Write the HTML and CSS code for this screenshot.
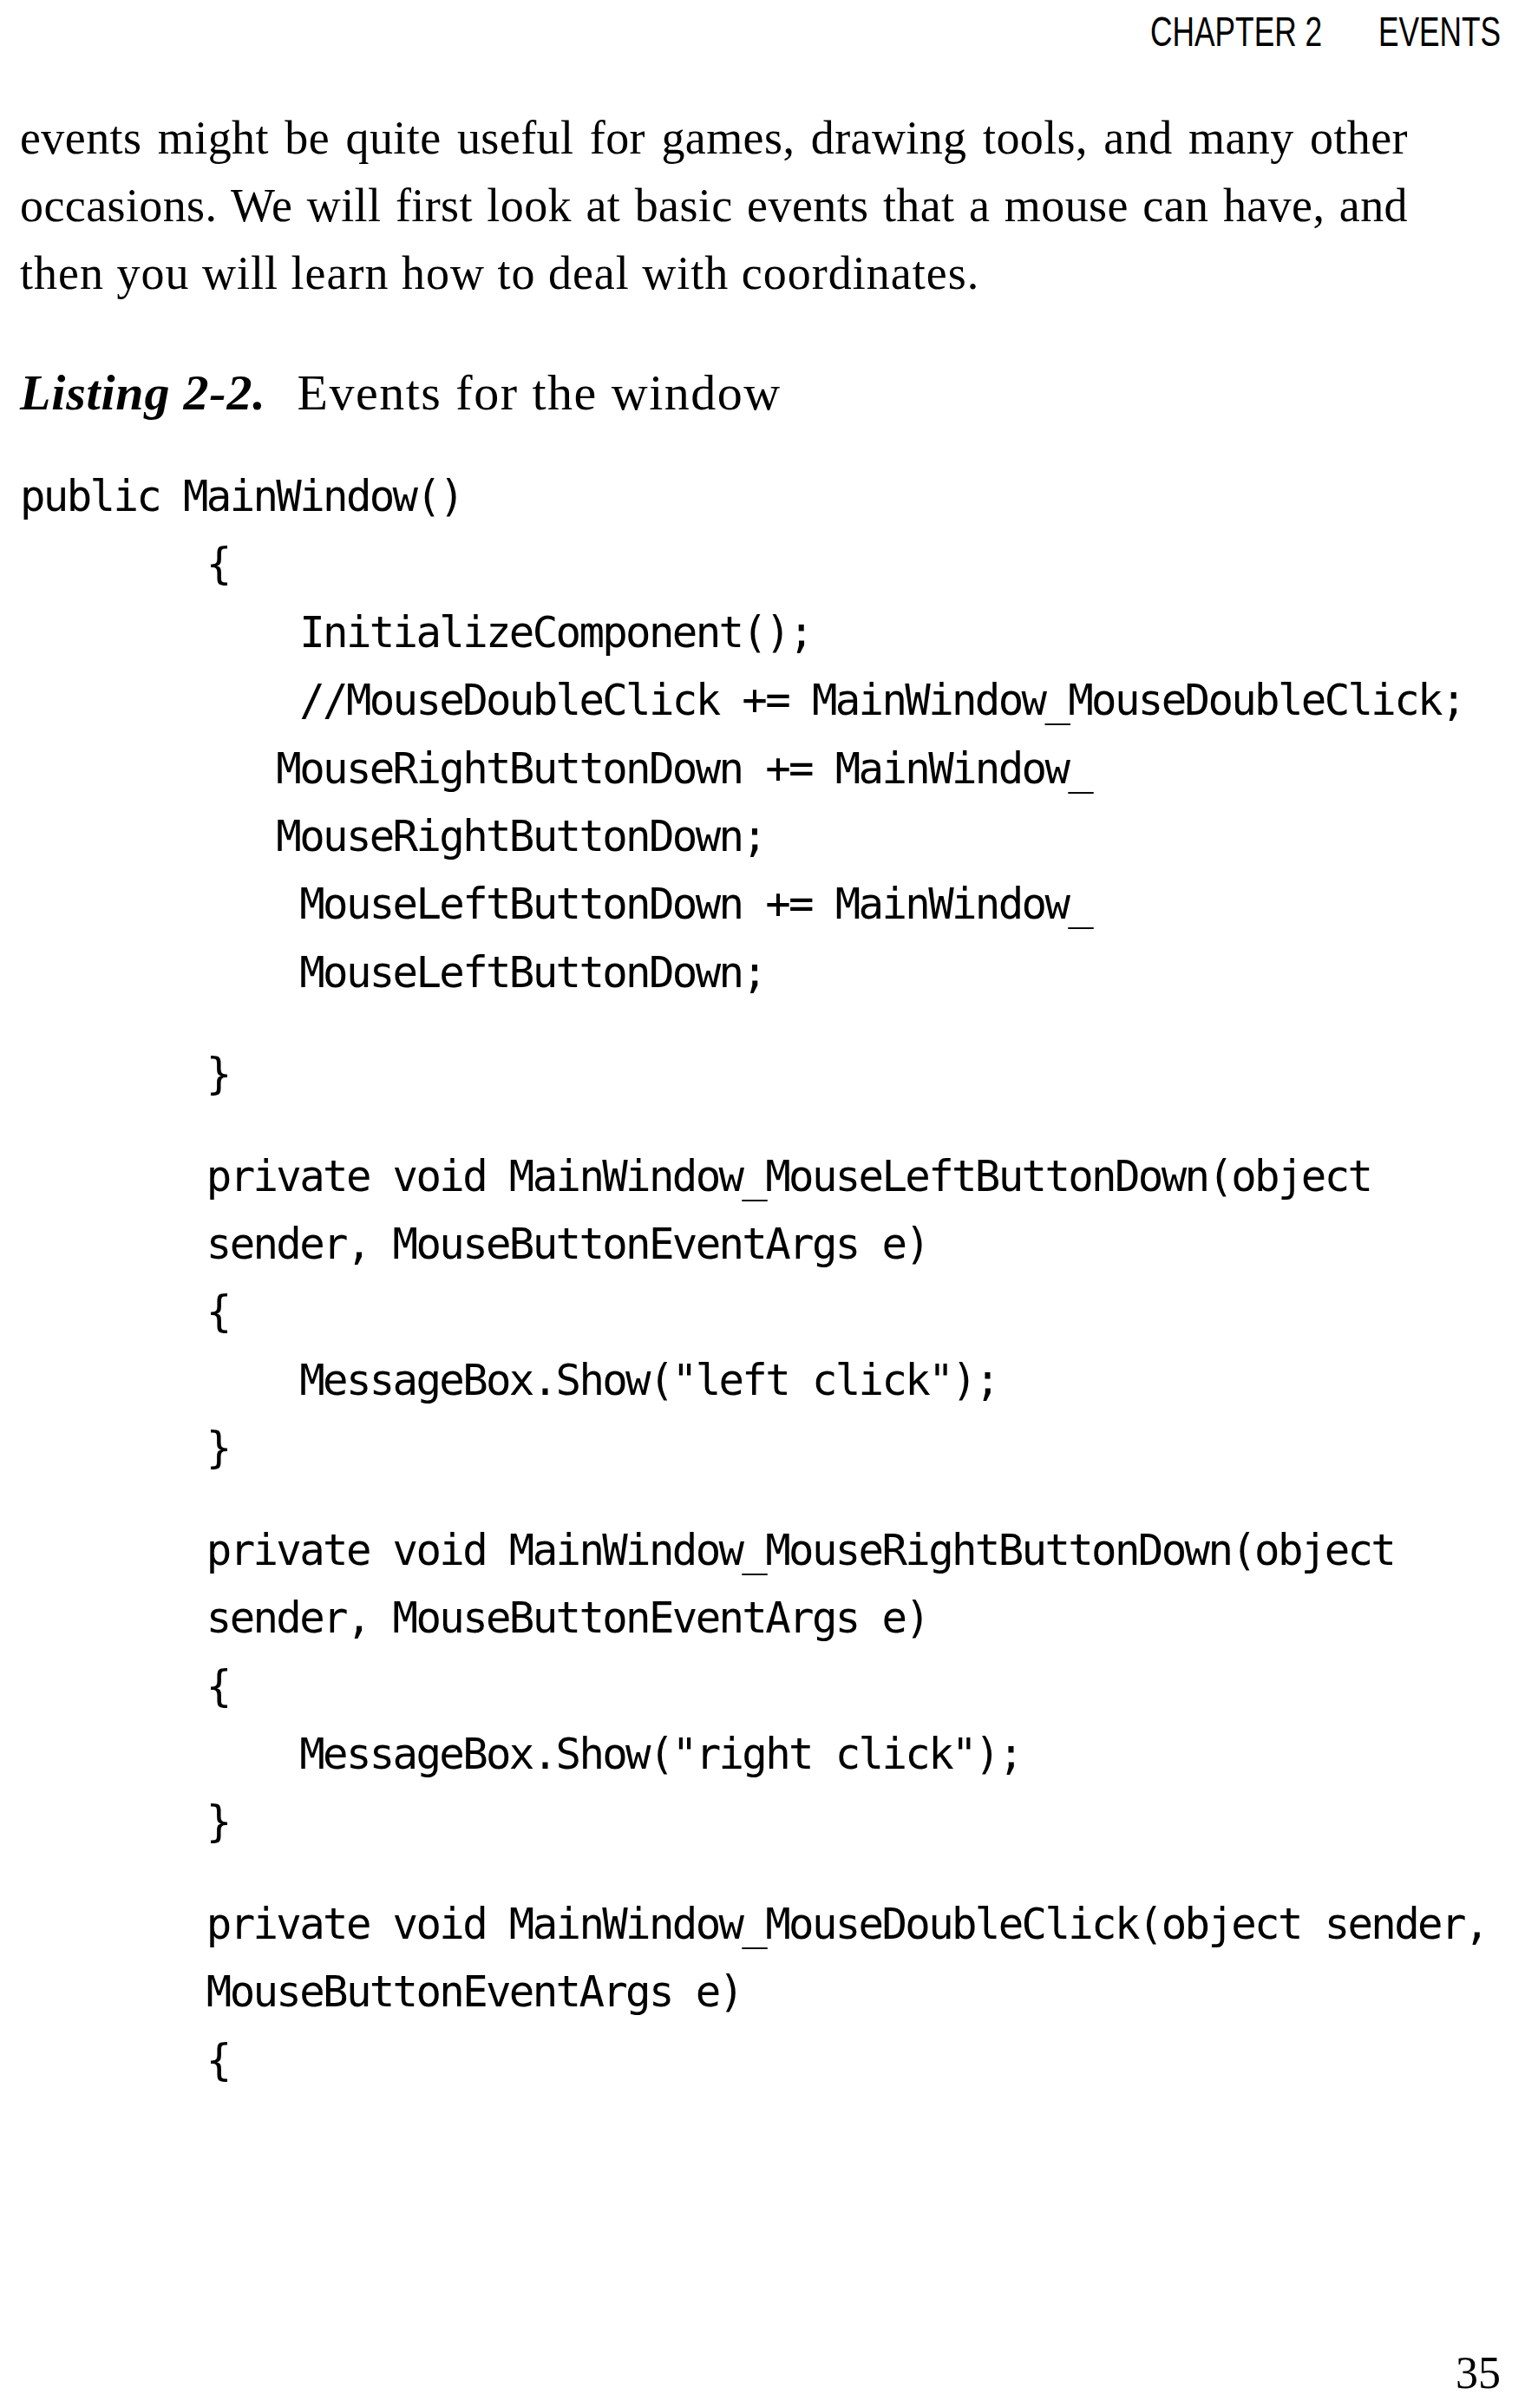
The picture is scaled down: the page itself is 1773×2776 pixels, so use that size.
FILE: index.html
```html
<!DOCTYPE html>
<html lang="en">
<head>
<meta charset="utf-8">
<title>Chapter 2 Events</title>
<link rel="stylesheet" href="styles.css">
</head>
<body>
<div class="page">
  <header class="running-head">
    <span class="running-head__inner"><span>CHAPTER 2</span><span>EVENTS</span></span>
  </header>

  <div class="prose">
    <span class="prose__line prose__line--full">events might be quite useful for games, drawing tools, and many other</span>
    <span class="prose__line prose__line--full">occasions. We will first look at basic events that a mouse can have, and</span>
    <span class="prose__line">then you will learn how to deal with coordinates.</span>
  </div>

  <div class="listing-title"><span class="listing-title__label">Listing 2-2.</span> Events for the window</div>

  <div class="code">
<pre class="code__block">public MainWindow()
        {
            InitializeComponent();
            //MouseDoubleClick += MainWindow_MouseDoubleClick;
           MouseRightButtonDown += MainWindow_
           MouseRightButtonDown;
            MouseLeftButtonDown += MainWindow_
            MouseLeftButtonDown;</pre>
<pre class="code__block">        }</pre>
<pre class="code__block">        private void MainWindow_MouseLeftButtonDown(object
        sender, MouseButtonEventArgs e)
        {
            MessageBox.Show("left click");
        }</pre>
<pre class="code__block">        private void MainWindow_MouseRightButtonDown(object
        sender, MouseButtonEventArgs e)
        {
            MessageBox.Show("right click");
        }</pre>
<pre class="code__block">        private void MainWindow_MouseDoubleClick(object sender,
        MouseButtonEventArgs e)
        {</pre>
  </div>

  <footer class="folio">35</footer>
</div>
</body>
</html>
```
FILE: styles.css
```css
html, body {
  margin: 0;
  padding: 0;
  background: #ffffff;
  color: #000000;
}

.page {
  min-height: 2776px;
  box-sizing: border-box;
  display: flex;
  flex-direction: column;
  padding: 6px 43px 10px 23px;
}

.running-head {
  display: flex;
  justify-content: flex-end;
  font-family: "Liberation Sans", Arial, sans-serif;
  font-size: 49px;
  line-height: 60px;
  height: 60px;
}

.running-head__inner {
  display: inline-flex;
  gap: 90px;
  white-space: nowrap;
  transform: scaleX(0.72);
  transform-origin: right center;
}

.prose {
  margin-top: 54px;
  width: 1600px;
  font-family: "Liberation Serif", "Times New Roman", serif;
  font-size: 54px;
  line-height: 78px;
  letter-spacing: 1px;
}

.prose__line {
  display: block;
  white-space: nowrap;
}

.prose__line--full {
  letter-spacing: 0.4px;
  text-align: justify;
  text-align-last: justify;
}

.listing-title {
  margin-top: 60px;
  font-family: "Liberation Serif", "Times New Roman", serif;
  font-size: 58px;
  line-height: 78px;
  letter-spacing: 1.5px;
  white-space: nowrap;
}

.listing-title__label {
  font-weight: bold;
  font-style: italic;
  letter-spacing: 0.8px;
  margin-right: 20px;
}

.code {
  margin-top: 42px;
  display: flex;
  flex-direction: column;
  gap: 39px;
}

.code__block {
  margin: 0;
  font-family: "DejaVu Sans Mono", "Liberation Mono", monospace;
  font-size: 49px;
  line-height: 78.4px;
  letter-spacing: -2.65px;
  white-space: pre;
}

.folio {
  margin-top: auto;
  align-self: flex-end;
  font-family: "Liberation Serif", "Times New Roman", serif;
  font-size: 52px;
  line-height: 60px;
}
```
